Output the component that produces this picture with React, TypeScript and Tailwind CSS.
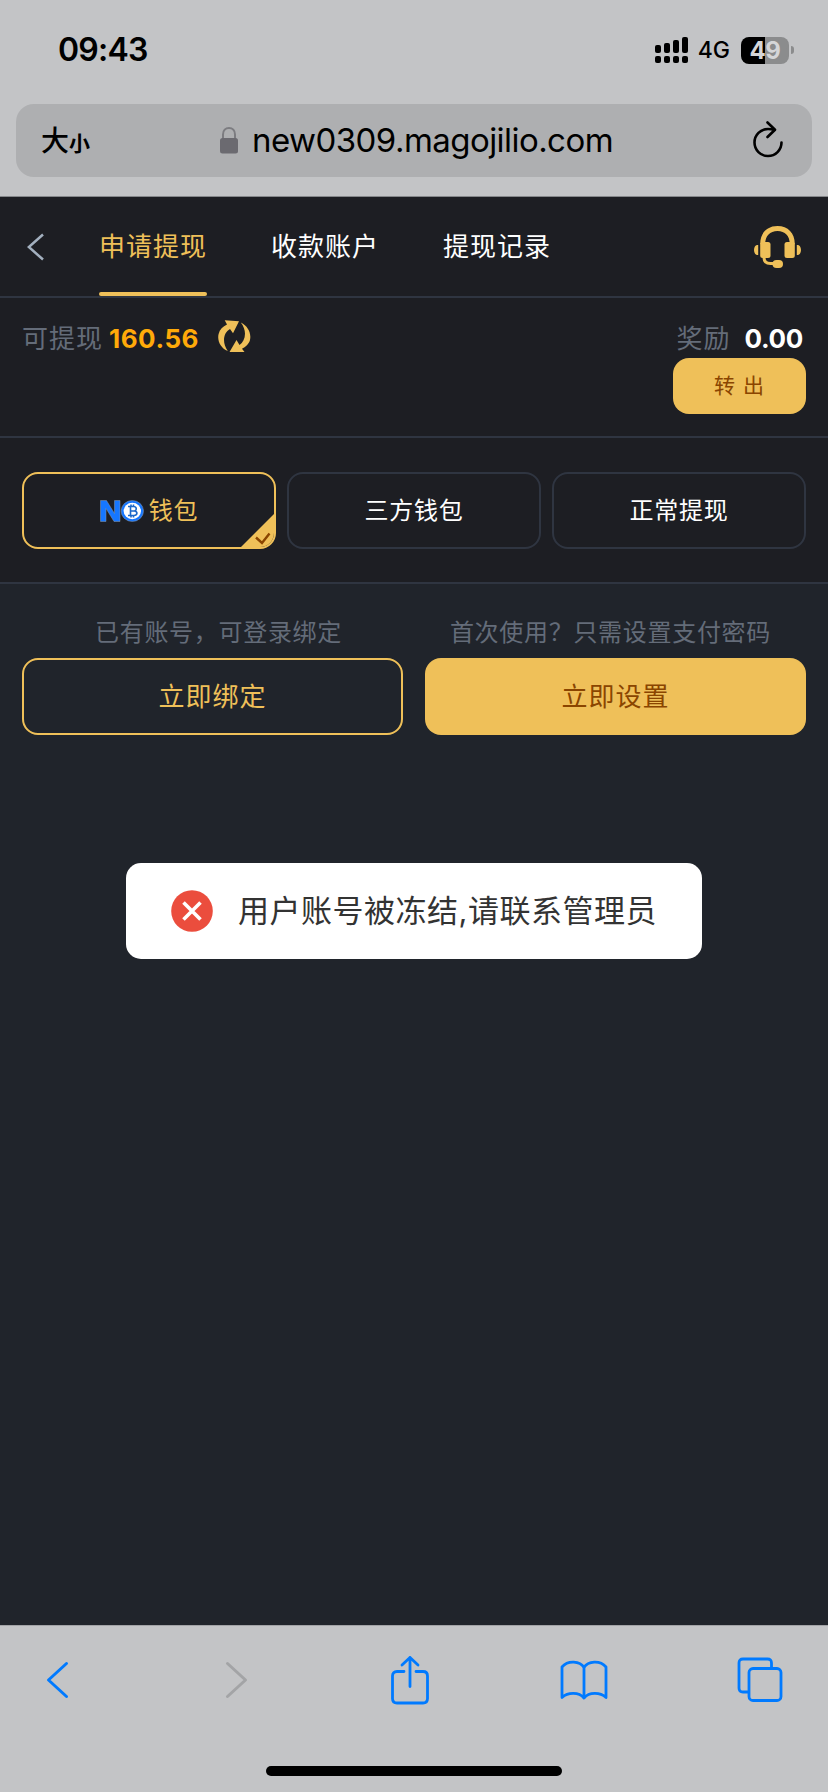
import React, { useState } from 'react';
import clsx from 'clsx';

const SignalIcon: React.FC = () => (
    <svg width="34" height="28" viewBox="0 0 34 28" fill="#000">
        <rect x="0" y="9" width="6" height="8" rx="2" />
        <rect x="9" y="7" width="6" height="10" rx="2" />
        <rect x="18" y="4" width="6" height="13" rx="2" />
        <rect x="27" y="1" width="6" height="16" rx="2" />
        <rect x="0" y="20" width="6" height="7" rx="2" />
        <rect x="9" y="20" width="6" height="7" rx="2" />
        <rect x="18" y="20" width="6" height="7" rx="2" />
        <rect x="27" y="20" width="6" height="7" rx="2" />
    </svg>
);

const LockIcon: React.FC = () => (
    <svg width="18" height="27" viewBox="0 0 18 27" fill="none">
        <path d="M3 13V7.500C3 3.500 5.500 1 9 1s6 2.500 6 6.500V13" stroke="#7c7c80" strokeWidth="2" />
        <rect x="0" y="11" width="18" height="15.500" rx="2.500" fill="#6b6a70" />
    </svg>
);

const ReloadIcon: React.FC = () => (
    <svg width="30" height="37" viewBox="0 0 30 37" fill="none" stroke="#000" strokeWidth="2.600" strokeLinecap="round" strokeLinejoin="round">
        <path d="M28.500 21.500A13.500 13.500 0 1 1 15 8q3 0 6.500 1" />
        <path d="M14.500 1.500 22 8.700l-7.500 7.300" />
    </svg>
);

const HeadsetIcon: React.FC = () => (
    <svg width="48" height="42" viewBox="0 0 48 42" fill="#efc059">
        <path d="M6.200 18C6.200 7 13 0 23.500 0s17.300 7 17.300 18h-5C35.800 10 31 5 23.500 5S11.200 10 11.200 18z" />
        <rect x="6.200" y="16" width="10.300" height="16" rx="2.500" />
        <rect x="30.500" y="16" width="10.300" height="16" rx="2.500" />
        <path d="M4.200 19v10C2 29.500 0 27.500 0 24s2-5.500 4.200-5zM42.800 19v10c2.200.5 4.200-1.500 4.200-5s-2-5.500-4.200-5z" />
        <path d="M10 30v1.500q0 6 6.500 6h4" fill="none" stroke="#efc059" strokeWidth="3" />
        <rect x="18.500" y="34" width="10.500" height="8" rx="4" />
    </svg>
);

const RefreshIcon: React.FC = () => (
    <svg width="33" height="33" viewBox="0 0 33 33" fill="#efc059">
        <path d="M6.700 0.300 21 1.300 15 13.300 12 9C5 13 4 23 9.800 31 2.500 28-1 20.500.6 14 1.700 9.500 4.800 6.500 9 4.600z" />
        <path d="M22.800 2.400C30 6 33.500 13 32 20c-1 4-4.500 7-8 8.800l2.500 3.200H11.500L18.500 20l3 5C27.500 20.500 29.500 11 22.800 2.400z" />
    </svg>
);

const WalletLogo: React.FC = () => (
    <svg width="44" height="22" viewBox="0 0 44 22">
        <path d="M0.500 21.500V.5h6l8 13V.5h5.500v21h-6L6 8.500v13z" fill="#1677ff" stroke="#8c99a8" strokeWidth="0.500" />
        <ellipse cx="32.300" cy="11" rx="11.200" ry="10.500" fill="#1677ff" stroke="#8c99a8" strokeWidth="0.500" />
        <ellipse cx="32.300" cy="11" rx="8.700" ry="8.200" fill="#fff" />
        <path d="M28 6.500h5.500c3.500 0 3.500 4 1 4.500 3.500.5 3 4.500-.5 4.500h-6M30.500 6v10M30.500 11h4M31 4.500v2M33.500 4.500v2M31 15.500v2M33.500 15.500v2" fill="none" stroke="#1c68c9" strokeWidth="1.600" />
    </svg>
);

const StatusBar: React.FC = () => (
    <div className="flex h-[104px] items-start justify-between pl-[58px] pr-[34px]">
        <span className="mt-[30px] text-[32px] font-semibold leading-[40px] tracking-[-0.8px]">09:43</span>
        <div className="mt-[36px] flex h-7 items-center">
            <SignalIcon />
            <span className="ml-[9px] text-[23px] font-medium leading-7">4G</span>
            <div className="ml-[11px] flex h-[27px] w-12 items-center justify-center rounded-[8px] bg-linear-to-r from-black from-50% to-[#8b8c8d] to-50% text-[24px] font-bold leading-[27px] tracking-[-0.5px] text-[#d5d6d8]">
                49
            </div>
            <div className="ml-[2px] h-2 w-[3px] rounded-r-full bg-[#8b8c8d]" />
        </div>
    </div>
);

const AddressBar: React.FC = () => (
    <div className="mx-4 flex h-[73px] items-center rounded-[18px] bg-[#aeafb1] pl-[25px] pr-[29px]">
        <div className="flex w-[179px] items-baseline">
            <span className="text-[28px] font-medium">大</span>
            <span className="text-[21px] font-bold">小</span>
        </div>
        <LockIcon />
        <span className="ml-[14px] -mt-[2px] text-[33px] leading-[40px] tracking-[-0.55px]">new0309.magojilio.com</span>
        <div className="-mt-[2px] ml-auto">
            <ReloadIcon />
        </div>
    </div>
);

const tabs = ['申请提现', '收款账户', '提现记录'];

const TabHeader: React.FC = () => {
    const [active, setActive] = useState(0);

    return (
        <header className="flex h-[101px] items-center border-b-2 border-[#2f3541] pl-[27px] pr-[26px]">
            <button aria-label="返回">
                <svg width="17" height="28" viewBox="0 0 17 28" fill="none" stroke="#a3b0bf" strokeWidth="2.500">
                    <path d="M16 1.500 1.800 14 16 26.500" />
                </svg>
            </button>
            <nav className="ml-[55px] flex h-full gap-16">
                {tabs.map((tab, i) => (
                    <button
                        key={tab}
                        onClick={() => setActive(i)}
                        className={clsx(
                            'relative h-full w-[108px] whitespace-nowrap text-[26px] tracking-[1px]',
                            i === active ? 'text-[#efc059]' : 'text-white'
                        )}
                    >
                        {tab}
                        {i === active && <span className="absolute inset-x-0 bottom-0 h-1 rounded-full bg-[#efc059]" />}
                    </button>
                ))}
            </nav>
            <button className="ml-auto" aria-label="客服">
                <HeadsetIcon />
            </button>
        </header>
    );
};

const BalanceRow: React.FC = () => (
    <section className="flex h-[140px] items-start justify-between border-b-2 border-[#2f3541] px-[22px] pt-5">
        <div className="flex h-10 items-center">
            <span className="text-[26px] tracking-[1px] text-[#646c79]">可提现</span>
            <span className="ml-[6px] text-[26px] font-bold tracking-[0.5px] text-[#ffaa09]">160.56</span>
            <button className="-mt-1 ml-[19px]" aria-label="刷新">
                <RefreshIcon />
            </button>
        </div>
        <div className="flex flex-col items-end">
            <div className="flex h-10 items-center pr-[3px]">
                <span className="text-[26px] tracking-[1px] text-[#646c79]">奖励</span>
                <span className="ml-[14px] text-[26px] font-bold tracking-[-0.3px] text-white">0.00</span>
            </div>
            <button className="h-14 w-[133px] rounded-[16px] bg-[#efc059] text-[21px] tracking-[1px] text-[#8a4500]">转 出</button>
        </div>
    </section>
);

const methods = ['钱包', '三方钱包', '正常提现'];

const MethodPicker: React.FC = () => {
    const [selected, setSelected] = useState(0);

    return (
        <section className="flex h-[146px] gap-[11px] border-b-2 border-[#2f3541] px-[22px] pt-[34px]">
            {methods.map((method, i) => (
                <button
                    key={method}
                    onClick={() => setSelected(i)}
                    className={clsx(
                        'relative flex h-[77px] flex-1 items-center justify-center overflow-hidden rounded-[16px] border-2 text-[24px] tracking-[0.7px]',
                        i === selected ? 'border-[#efc059] text-[#efc059]' : 'border-[#2f3541] text-white'
                    )}
                >
                    {i === 0 && <span className="mr-[5px]"><WalletLogo /></span>}
                    {method}
                    {i === selected && (
                        <svg className="absolute bottom-0 right-0" width="33" height="33" viewBox="0 0 33 33">
                            <path d="M33 0v33H0z" fill="#efc059" />
                            <path d="M15 23.500l6 5.500 7.500-9.500" fill="none" stroke="#8a4500" strokeWidth="2.400" />
                        </svg>
                    )}
                </button>
            ))}
        </section>
    );
};

const BindActions: React.FC = () => (
    <section className="px-[22px] pt-[31px]">
        <div className="flex h-[43px] items-start justify-between pl-[73px] pr-[35px] text-[24px] leading-9 tracking-[0.7px] text-[#646c79]">
            <span>已有账号，可登录绑定</span>
            <span>首次使用？只需设置支付密码</span>
        </div>
        <div className="grid grid-cols-2 gap-[22px] text-[26px] tracking-[1px]">
            <button className="h-[77px] rounded-[16px] border-2 border-[#efc059] text-[#efc059]">立即绑定</button>
            <button className="h-[77px] rounded-[16px] bg-[#efc059] text-[#8a4500]">立即设置</button>
        </div>
    </section>
);

const Toast: React.FC<{ message: string }> = ({ message }) => (
    <div className="mx-auto mt-32 flex h-[96px] w-[576px] items-center rounded-[15px] bg-white pl-[45px]">
        <svg width="42" height="42" viewBox="0 0 42 42">
            <circle cx="21" cy="21" r="20.800" fill="#eb4d3d" />
            <path d="M12.500 12.500l17 17M29.500 12.500l-17 17" stroke="#fff" strokeWidth="3.600" />
        </svg>
        <span className="ml-[25px] whitespace-nowrap text-[31px] tracking-[0.5px] text-[#333]">{message}</span>
    </div>
);

const BottomBar: React.FC = () => (
    <footer className="flex h-[167px] flex-col items-center border-t border-[#a2a3a6] bg-[#c3c4c6]">
        <div className="flex h-[108px] w-full items-center pl-[46px] text-[#007aff]">
            <svg width="23" height="38" viewBox="0 0 23 38" fill="none" stroke="currentColor" strokeWidth="3" strokeLinecap="round" strokeLinejoin="round">
                <path d="M20.500 2.500 2.500 19l18 16.500" />
            </svg>
            <svg className="ml-[156px]" width="23" height="38" viewBox="0 0 23 38" fill="none" stroke="#a3a4a6" strokeWidth="3" strokeLinecap="round" strokeLinejoin="round">
                <path d="M2.500 2.500 20.500 19l-18 16.500" />
            </svg>
            <svg className="ml-[143px]" width="38" height="50" viewBox="0 0 38 50" fill="none" stroke="currentColor" strokeWidth="2.800" strokeLinecap="round" strokeLinejoin="round">
                <path d="M13 16.500H6q-4.500 0-4.500 4.500v22.500q0 4.500 4.500 4.500h26q4.500 0 4.500-4.500V21q0-4.500-4.500-4.500h-7" />
                <path d="M19 31.500V2.500M11 10l8-7.500 8 7.500" />
            </svg>
            <svg className="ml-[131px]" width="48" height="40" viewBox="0 0 48 40" fill="none" stroke="currentColor" strokeWidth="2.800" strokeLinecap="round" strokeLinejoin="round">
                <path d="M24 7.500C20 1 8 0 2 7v30.500c6-5.500 17-5.500 22 .5 5-6 16-6 22-.5V7C40 0 28 1 24 7.500zM24 7.500V38" />
            </svg>
            <svg className="ml-[129px]" width="46" height="46" viewBox="0 0 46 46" fill="none" stroke="currentColor" strokeWidth="2.800">
                <rect x="12" y="11.500" width="32" height="32" rx="4" />
                <path d="M34.500 11V6q0-4-4-4H6Q2 2 2 6v25q0 4 4 4h5.500" />
            </svg>
        </div>
        <div className="mt-8 h-[10px] w-[296px] rounded-full bg-black" />
    </footer>
);

const App: React.FC = () => {
    return (
        <div className="flex h-[1792px] w-[828px] flex-col overflow-hidden bg-[#20242b] font-['Inter','Noto_Sans_CJK_SC',sans-serif]">
            <div className="h-[197px] border-b border-[#85878a] bg-[#c3c4c6] text-black">
                <StatusBar />
                <AddressBar />
            </div>
            <div className="bg-[#1d1e23]">
                <TabHeader />
                <BalanceRow />
                <MethodPicker />
            </div>
            <main className="flex-1">
                <BindActions />
                <Toast message="用户账号被冻结,请联系管理员" />
            </main>
            <BottomBar />
        </div>
    );
};

export default App;
